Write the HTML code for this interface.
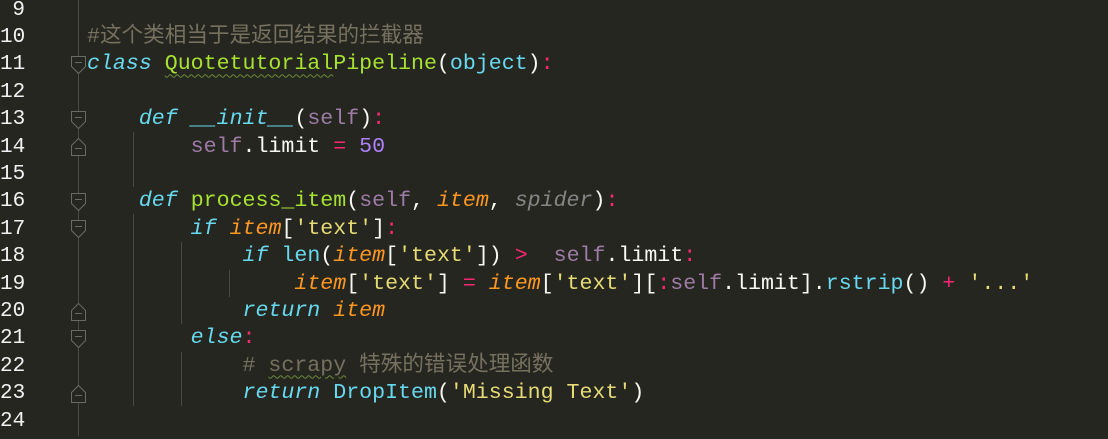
<!DOCTYPE html>
<html><head><meta charset="utf-8"><style>
html,body{margin:0;padding:0;background:#272822;}
body{width:1108px;height:436px;overflow:hidden;position:relative;background:#262621;}
.wrap{position:absolute;left:0;top:2.5px;width:1108px;height:436px;}
.ln{position:absolute;left:0;width:25px;text-align:right;font:21px/27.4px "Liberation Mono","DejaVu Sans Mono",monospace;color:#f2f2f2;}
.c{position:absolute;left:87px;white-space:pre;font:21.6px/27.4px "Liberation Mono","Noto Sans CJK SC",monospace;color:#f8f8f2;}
.k{color:#66d9ef;font-style:italic}
.f{color:#a6e22e}
.s{color:#9d7ba5}
.p{color:#fd971f;font-style:italic}
.g{color:#858585;font-style:italic}
.st{color:#e6db74}
.o{color:#f92672}
.n{color:#ae81ff}
.b{color:#66d9ef}
.cm{color:#75715e}
.w{text-decoration:underline wavy #6a8a3a;text-underline-offset:4px;text-decoration-thickness:1px}
</style></head><body>
<svg width="1108" height="436" style="position:absolute;left:0;top:0">
<g stroke="#4a4a44" stroke-width="1" fill="none">
<line x1="78.5" y1="0" x2="78.5" y2="436"/>
<line x1="133.5" y1="132" x2="133.5" y2="187"/>
<line x1="133.5" y1="214" x2="133.5" y2="406"/>
<line x1="181.5" y1="242" x2="181.5" y2="324"/>
<line x1="181.5" y1="352" x2="181.5" y2="406"/>
<line x1="229.5" y1="270" x2="229.5" y2="297"/>
</g>
<g stroke="#6a6a62" stroke-width="1" fill="#262621">
<path d="M71.5 56.5h14v10l-7 7l-7-7z"/><line x1="75" y1="62.5" x2="82" y2="62.5"/>
<path d="M71.5 111.5h14v10l-7 7l-7-7z"/><line x1="75" y1="117.5" x2="82" y2="117.5"/>
<path d="M71.5 193.5h14v10l-7 7l-7-7z"/><line x1="75" y1="199.5" x2="82" y2="199.5"/>
<path d="M71.5 220.5h14v10l-7 7l-7-7z"/><line x1="75" y1="226.5" x2="82" y2="226.5"/>
<path d="M71.5 330.5h14v10l-7 7l-7-7z"/><line x1="75" y1="336.5" x2="82" y2="336.5"/>
<path d="M71.5 155.5h14v-10l-7-7l-7 7z"/><line x1="75" y1="148.5" x2="82" y2="148.5"/>
<path d="M71.5 320.5h14v-10l-7-7l-7 7z"/><line x1="75" y1="313.5" x2="82" y2="313.5"/>
<path d="M71.5 402.5h14v-10l-7-7l-7 7z"/><line x1="75" y1="395.5" x2="82" y2="395.5"/>
</g>
</svg>
<div class="wrap">
<div class="ln" style="top:-6px">9</div>
<div class="ln" style="top:21.4px">10</div>
<div class="ln" style="top:48.8px">11</div>
<div class="ln" style="top:76.2px">12</div>
<div class="ln" style="top:103.6px">13</div>
<div class="ln" style="top:131px">14</div>
<div class="ln" style="top:158.4px">15</div>
<div class="ln" style="top:185.8px">16</div>
<div class="ln" style="top:213.2px">17</div>
<div class="ln" style="top:240.6px">18</div>
<div class="ln" style="top:268px">19</div>
<div class="ln" style="top:295.4px">20</div>
<div class="ln" style="top:322.8px">21</div>
<div class="ln" style="top:350.2px">22</div>
<div class="ln" style="top:377.6px">23</div>
<div class="ln" style="top:405px">24</div>

<div class="c cm" style="top:21.4px">#这个类相当于是返回结果的拦截器</div>
<div class="c" style="top:48.8px"><span class="k">class</span> <span class="f"><span class="w">Quotetutorial</span>Pipeline</span>(<span class="b">object</span>)<span class="o">:</span></div>
<div class="c" style="top:103.6px">    <span class="k">def</span> <span class="b" style="font-style:italic">__init__</span>(<span class="s">self</span>)<span class="o">:</span></div>
<div class="c" style="top:131px">        <span class="s">self</span>.limit <span class="o">=</span> <span class="n">50</span></div>
<div class="c" style="top:185.8px">    <span class="k">def</span> <span class="f">process_item</span>(<span class="s">self</span>, <span class="p">item</span>, <span class="g">spider</span>)<span class="o">:</span></div>
<div class="c" style="top:213.2px">        <span class="k">if</span> <span class="p">item</span>[<span class="st">'text'</span>]<span class="o">:</span></div>
<div class="c" style="top:240.6px">            <span class="k">if</span> <span class="b">len</span>(<span class="p">item</span>[<span class="st">'text'</span>]) <span class="o">&gt;</span>  <span class="s">self</span>.limit<span class="o">:</span></div>
<div class="c" style="top:268px">                <span class="p">item</span>[<span class="st">'text'</span>] <span class="o">=</span> <span class="p">item</span>[<span class="st">'text'</span>][<span class="o">:</span><span class="s">self</span>.limit].<span class="b">rstrip</span>() <span class="o">+</span> <span class="st">'...'</span></div>
<div class="c" style="top:295.4px">            <span class="k">return</span> <span class="p">item</span></div>
<div class="c" style="top:322.8px">        <span class="k">else</span><span class="o">:</span></div>
<div class="c cm" style="top:350.2px">            # <span class="w">scrapy</span> 特殊的错误处理函数</div>
<div class="c" style="top:377.6px">            <span class="k">return</span> <span class="b">DropItem</span>(<span class="st">'Missing Text'</span>)</div>
</div>
</body></html>
